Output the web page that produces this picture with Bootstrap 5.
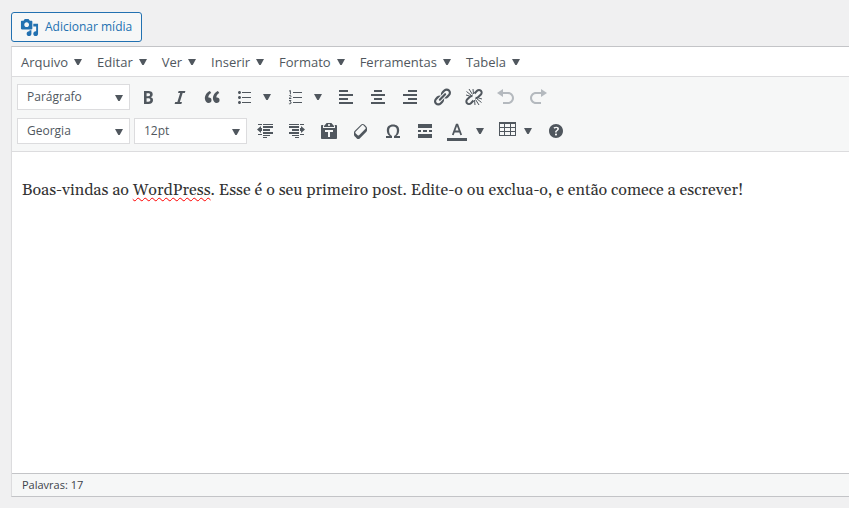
<!DOCTYPE html>
<html lang="pt-BR">
<head>
<meta charset="utf-8">
<meta name="viewport" content="width=device-width, initial-scale=1">
<title>Editor</title>
<link href="https://cdn.jsdelivr.net/npm/bootstrap@5.3.0/dist/css/bootstrap.min.css" rel="stylesheet">
<style>
:root { --ink: #50575e; --line: #dcdcde; --edge: #c3c4c7; --panel: #f6f7f7; }
body { background: #f0f0f1; color: var(--ink); font-family: "Open Sans", sans-serif; font-size: 13px; line-height: 20px; }
main { padding: 12px 0 0 11px; }
svg { display: block; fill: currentColor; flex: none; }
.btn-media { --bs-btn-color: #2271b1; --bs-btn-bg: #f6f7f7; --bs-btn-border-color: #2271b1; --bs-btn-hover-color: #0a4b78; --bs-btn-hover-bg: #f0f0f1; --bs-btn-hover-border-color: #0a4b78; height: 30px; padding: 0 9px 0 8px; border-radius: 3px; font-size: 12px; gap: 6px; }
.editor { border: 1px solid var(--line); border-top-color: var(--edge); border-right: 0; border-bottom: 1px solid var(--edge); box-shadow: 0 1px 1px rgba(0,0,0,.04); }
.menus { border-bottom: 1px solid var(--line); padding-left: 9px; gap: 15px; height: 30px; }
.menus button, .tool { color: var(--ink); background: none; border: 0; padding: 0; }
.menus button { display: flex; align-items: center; gap: 6px; }
.arrow { width: 8px; height: 6px; }
.tools { background: var(--panel); border-bottom: 1px solid var(--line); padding: 6px 0 6px 5px; gap: 6px; }
.tool-row { height: 28px; }
.tool { display: flex; align-items: center; padding: 0 6px; height: 28px; }
.tool.split { padding-right: 8px; gap: 9px; }
.tool.split.grid-tool { gap: 6px; }
.tool:disabled { color: #b4b9be; }
.pick { width: 113px; height: 26px; margin-right: 4px; }
.pick.last-pick { margin-right: 2px; }
.pick select { display: block; width: 100%; height: 100%; appearance: none; border: 1px solid var(--line); background: #fff; color: var(--ink); padding: 0 20px 0 9px; font-size: 12px; }
.pick .arrow { right: 7px; top: 11px; pointer-events: none; }
.writing { background: #fff; min-height: 321px; padding: 26px 10px; color: #333; font: 16px/24px Gelasio, Georgia, "Liberation Serif", serif; }
.misspelt { text-decoration: underline wavy #f00 1px; text-decoration-skip-ink: none; text-underline-offset: 2px; }
.status { background: var(--panel); border-top: 1px solid var(--edge); padding: 1px 10px; font-size: 11px; color: #3c434a; }
</style>
</head>
<body>
<svg class="d-none" aria-hidden="true"><symbol id="down" viewBox="0 0 8 6"><path d="M0 0h8L4.700 6H3.300z"/></symbol></svg>
<main class="d-flex flex-column align-items-stretch">
<div class="d-flex">
<button type="button" class="btn btn-media d-inline-flex align-items-center"><svg width="19" height="19" viewBox="0 0 20 20" aria-hidden="true"><path fill-rule="evenodd" d="M13 11V4c0-.55-.45-1-1-1h-1.67L9 1H5L3.67 3H2c-.55 0-1 .45-1 1v7c0 .55.45 1 1 1h10c.55 0 1-.45 1-1zM7 4.5c1.38 0 2.5 1.12 2.5 2.5S8.380 9.500 7 9.500 4.500 8.380 4.500 7 5.620 4.500 7 4.500zM14 6h5v10.500c0 1.380-1.120 2.500-2.500 2.500S14 17.880 14 16.500s1.120-2.500 2.500-2.500c.17 0 .34.02.5.05V9h-3V6zm-4 8.050V13h2v3.500c0 1.380-1.120 2.500-2.500 2.500S7 17.880 7 16.500 8.120 14 9.500 14c.17 0 .34.02.5.05z"/></svg>Adicionar mídia</button>
</div>
<section class="editor mt-1">
<nav class="menus d-flex bg-white" aria-label="Menu">
<button type="button">Arquivo <svg class="arrow"><use href="#down"/></svg></button>
<button type="button">Editar <svg class="arrow"><use href="#down"/></svg></button>
<button type="button">Ver <svg class="arrow"><use href="#down"/></svg></button>
<button type="button">Inserir <svg class="arrow"><use href="#down"/></svg></button>
<button type="button">Formato <svg class="arrow"><use href="#down"/></svg></button>
<button type="button">Ferramentas <svg class="arrow"><use href="#down"/></svg></button>
<button type="button">Tabela <svg class="arrow"><use href="#down"/></svg></button>
</nav>
<div class="tools d-flex flex-column" role="toolbar" aria-label="Formatação">
<div class="tool-row d-flex align-items-center">
<div class="pick last-pick position-relative"><select aria-label="Estilo"><option>Parágrafo</option></select><svg class="arrow position-absolute"><use href="#down"/></svg></div>
<button type="button" class="tool" aria-label="Negrito"><svg width="20" height="20" viewBox="0 0 20 20"><path d="M6 4v13h4.54c1.37 0 2.46-.33 3.26-1 .8-.66 1.2-1.58 1.2-2.77 0-.84-.17-1.51-.51-2.01s-.9-.85-1.67-1.03v-.09c.57-.1 1.02-.4 1.36-.9s.51-1.13.51-1.91c0-1.14-.39-1.98-1.17-2.5C12.75 4.26 11.5 4 9.78 4H6zm2.57 5.15V6.26h1.36c.73 0 1.27.11 1.61.32.34.22.51.58.51 1.07 0 .54-.16.92-.47 1.15s-.82.35-1.51.35h-1.5zm0 2.19h1.6c1.44 0 2.16.53 2.16 1.61 0 .6-.17 1.05-.51 1.34s-.86.43-1.57.43H8.57v-3.38z"/></svg></button>
<button type="button" class="tool" aria-label="Itálico"><svg width="20" height="20" viewBox="0 0 20 20"><path d="M14.78 6h-2.13l-2.8 9h2.12l-.62 2H4.6l.62-2h2.14l2.8-9H8.03l.62-2h6.75z"/></svg></button>
<button type="button" class="tool" aria-label="Citação"><svg width="20" height="20" viewBox="0 0 20 20"><path d="M9.49 13.22c0-.74-.2-1.38-.61-1.9-.62-.78-1.83-.88-2.53-.72-.29-1.65 1.11-3.75 2.92-4.65L7.88 4c-2.73 1.3-5.42 4.28-4.96 8.05C3.21 14.43 4.59 16 6.54 16c.85 0 1.56-.25 2.12-.75s.83-1.18.83-2.03zm8.05 0c0-.74-.2-1.38-.61-1.9-.63-.78-1.83-.88-2.53-.72-.29-1.65 1.11-3.75 2.92-4.65L15.93 4c-2.73 1.3-5.41 4.28-4.95 8.05.29 2.38 1.66 3.95 3.61 3.95.85 0 1.56-.25 2.12-.75s.83-1.18.83-2.03z"/></svg></button>
<button type="button" class="tool split" aria-label="Lista com marcadores"><svg width="20" height="20" viewBox="0 0 20 20"><path d="M5.5 7C4.67 7 4 6.33 4 5.5 4 4.68 4.67 4 5.5 4 6.32 4 7 4.68 7 5.5 7 6.33 6.32 7 5.5 7zM8 5h9v1H8V5zm-2.5 7c-.83 0-1.5-.67-1.5-1.5C4 9.68 4.67 9 5.5 9c.82 0 1.5.68 1.5 1.5 0 .83-.68 1.5-1.5 1.5zM8 10h9v1H8v-1zm-2.5 7c-.83 0-1.5-.67-1.5-1.5 0-.82.67-1.5 1.5-1.5.82 0 1.5.68 1.5 1.5 0 .83-.68 1.5-1.5 1.5zM8 15h9v1H8v-1z"/></svg><svg class="arrow"><use href="#down"/></svg></button>
<button type="button" class="tool split" aria-label="Lista numerada"><svg width="20" height="20" viewBox="0 0 20 20"><path d="M8 5h9v1H8zM8 10h9v1H8zM8 15h9v1H8z"/><path fill="none" stroke="currentColor" stroke-width="1" d="M4 4.2l1.400-.7v3.800M4 9c.3-.8 2-.8 2 .2 0 .7-1 1.300-2 2.300h2.300M4 13.500h2l-1 1.300c1.600 0 1.600 2-.1 2-.5 0-.8-.1-1-.4"/></svg><svg class="arrow"><use href="#down"/></svg></button>
<button type="button" class="tool" aria-label="Alinhar à esquerda"><svg width="20" height="20" viewBox="0 0 20 20"><path d="M3 3h9v2H3zM3 7h14v2H3zM3 11h9v2H3zM3 15h14v2H3z"/></svg></button>
<button type="button" class="tool" aria-label="Centralizar"><svg width="20" height="20" viewBox="0 0 20 20"><path d="M6 3h8v2H6zM3 7h14v2H3zM6 11h8v2H6zM3 15h14v2H3z"/></svg></button>
<button type="button" class="tool" aria-label="Alinhar à direita"><svg width="20" height="20" viewBox="0 0 20 20"><path d="M8 3h9v2H8zM3 7h14v2H3zM8 11h9v2H8zM3 15h14v2H3z"/></svg></button>
<button type="button" class="tool" aria-label="Inserir link"><svg width="20" height="20" viewBox="0 0 20 20"><path d="M17.74 2.76c1.68 1.69 1.68 4.41 0 6.1l-1.53 1.52c-1.12 1.12-2.7 1.47-4.14 1.09l2.62-2.61.76-.77.76-.76c.84-.84.84-2.2 0-3.04-.84-.85-2.2-.85-3.04 0l-.77.76-3.38 3.38c-.37-1.44-.02-3.02 1.1-4.14l1.52-1.53c1.69-1.68 4.42-1.68 6.1 0zM8.59 13.43l5.34-5.34c.42-.42.42-1.1 0-1.52-.44-.43-1.13-.39-1.53 0l-5.33 5.34c-.42.42-.42 1.1 0 1.52.44.43 1.13.39 1.52 0zm-.76 2.29l4.14-4.15c.38 1.44.03 3.02-1.09 4.14l-1.52 1.53c-1.69 1.68-4.41 1.68-6.1 0-1.68-1.68-1.68-4.42 0-6.1l1.53-1.52c1.12-1.12 2.7-1.47 4.14-1.1l-4.14 4.15c-.85.84-.85 2.2 0 3.05.84.84 2.2.84 3.04 0z"/></svg></button>
<button type="button" class="tool" aria-label="Remover link"><svg width="20" height="20" viewBox="0 0 20 20"><g fill="none" stroke="currentColor"><path stroke-width="2" d="M10.500 6.500l2.600-2.800c1-1 2.800-1 3.800 0s1 2.800 0 3.800L14 10.300c-.7.700-1.700.8-2.500.5M9.500 13.500l-2.600 2.800c-1 1-2.800 1-3.800 0s-1-2.800 0-3.800L6 9.700c.7-.7 1.700-.8 2.500-.5"/><path d="M9 2l.5 5M5 2l3.500 5.500M2.500 4.500l5 4M2 8l3.500 1M11 18l-.5-5M15 18l-3.500-5.500M17.500 15.500l-5-4M18 12l-3.500-1"/></g></svg></button>
<button type="button" class="tool" aria-label="Desfazer" disabled><svg width="20" height="20" viewBox="0 0 20 20"><path d="M12 5H7V2L1 6l6 4V7h5c2.200 0 4 1.800 4 4s-1.800 4-4 4H7v2h5c3.300 0 6-2.700 6-6s-2.700-6-6-6z"/></svg></button>
<button type="button" class="tool" aria-label="Refazer" disabled><svg width="20" height="20" viewBox="0 0 20 20"><path d="M8 5h5V2l6 4-6 4V7H8c-2.200 0-4 1.800-4 4s1.800 4 4 4h5v2H8c-3.300 0-6-2.700-6-6s2.700-6 6-6z"/></svg></button>
</div>
<div class="tool-row d-flex align-items-center">
<div class="pick position-relative"><select aria-label="Fonte"><option>Georgia</option></select><svg class="arrow position-absolute"><use href="#down"/></svg></div>
<div class="pick last-pick position-relative"><select aria-label="Tamanho"><option>12pt</option></select><svg class="arrow position-absolute"><use href="#down"/></svg></div>
<button type="button" class="tool" aria-label="Diminuir recuo"><svg width="20" height="20" viewBox="0 0 20 20"><path d="M3 3h4v1H3zM8 3h10v1H8zM8 5h10v2H8zM8 8h7v2H8zM8 11h10v2H8zM3 13h4v1H3zM8 14h7v1H8zM8 16h4v1H8zM2 8.500L6 5v2h1v3H6v2z"/></svg></button>
<button type="button" class="tool" aria-label="Aumentar recuo"><svg width="20" height="20" viewBox="0 0 20 20"><path d="M13 3h4v1h-4zM2 3h10v1H2zM2 5h10v2H2zM5 8h7v2H5zM2 11h10v2H2zM13 13h4v1h-4zM5 14h7v1H5zM8 16h4v1H8zM18 8.500L14 5v2h-1v3h1v2z"/></svg></button>
<button type="button" class="tool" aria-label="Colar como texto"><svg width="20" height="20" viewBox="0 0 20 20"><path fill-rule="evenodd" d="M12.380 2L15 5v1H5V5l2.640-3h4.740zM10 5c.55 0 1-.44 1-1 0-.55-.45-1-1-1s-1 .45-1 1c0 .56.45 1 1 1zm5.450-1H17c.55 0 1 .45 1 1v12c0 .56-.45 1-1 1H3c-.55 0-1-.44-1-1V5c0-.55.45-1 1-1h1.550L4 4.630V7h12V4.630zM14 11V9H6v2h3v5h2v-5h3z"/></svg></button>
<button type="button" class="tool" aria-label="Limpar formatação"><svg width="20" height="20" viewBox="0 0 20 20"><path fill-rule="evenodd" d="M14.290 4.590l1.100 1.110c.41.4.61.94.61 1.470v2.120c0 .53-.2 1.070-.61 1.470l-6.630 6.630c-.4.41-.94.61-1.470.61s-1.070-.2-1.470-.61l-1.110-1.100-1.100-1.110c-.41-.4-.61-.94-.61-1.470v-2.120c0-.54.2-1.070.61-1.480l6.630-6.620c.4-.41.94-.61 1.470-.61s1.060.2 1.470.61zm-6.210 9.700l6.420-6.420c.39-.39.39-1.030 0-1.430L12.360 4.300c-.19-.19-.45-.29-.72-.29s-.52.1-.71.29l-6.420 6.420c-.39.4-.39 1.040 0 1.430l2.140 2.140c.38.38 1.040.38 1.430 0z"/></svg></button>
<button type="button" class="tool" aria-label="Caractere especial"><svg width="20" height="20" viewBox="0 0 20 20"><path d="M10 5.400c1.270 0 2.240.36 2.910 1.080.66.71 1 1.760 1 3.130 0 1.280-.23 2.370-.69 3.270-.47.89-1.270 1.520-2.220 2.120v2h6v-2h-3.690c.92-.64 1.620-1.340 2.120-2.340.49-1.010.74-2.130.74-3.350 0-1.780-.55-3.190-1.650-4.220S11.920 3.540 10 3.540s-3.430.53-4.520 1.570c-1.100 1.040-1.650 2.440-1.650 4.200 0 1.210.24 2.310.73 3.330.48 1.010 1.190 1.710 2.100 2.360H3v2h6v-2c-.98-.64-1.800-1.280-2.240-2.170-.45-.89-.67-1.960-.67-3.220 0-1.370.33-2.410 1-3.130C7.750 5.760 8.720 5.400 10 5.400z"/></svg></button>
<button type="button" class="tool" aria-label="Inserir quebra"><svg width="20" height="20" viewBox="0 0 20 20"><path d="M17 7V3H3v4h14zM6 11V9H3v2h3zm6 0V9H8v2h4zm5 0V9h-3v2h3zm0 6v-4H3v4h14z"/></svg></button>
<button type="button" class="tool split" aria-label="Cor do texto"><svg width="20" height="20" viewBox="0 0 20 20"><path fill="none" stroke="currentColor" stroke-width="1.800" d="M5.800 14L9.600 3.700h.8L14.200 14M7.200 10.500h5.600"/><path d="M0 17h20v3H0z"/></svg><svg class="arrow"><use href="#down"/></svg></button>
<button type="button" class="tool split grid-tool" aria-label="Tabela"><svg width="20" height="20" viewBox="0 0 20 20"><path fill-rule="evenodd" d="M1 1h17v14H1zM2 3v3h4V3zM7 3v3h5V3zM13 3v3h4V3zM2 7v3h4V7zM7 7v3h5V7zM13 7v3h4V7zM2 11v3h4v-3zM7 11v3h5v-3zM13 11v3h4v-3z"/></svg><svg class="arrow"><use href="#down"/></svg></button>
<button type="button" class="tool" aria-label="Ajuda"><svg width="20" height="20" viewBox="0 0 20 20"><path fill-rule="evenodd" d="M17 10c0-3.870-3.140-7-7-7-3.870 0-7 3.130-7 7s3.130 7 7 7c3.860 0 7-3.130 7-7zm-6.300 1.480H9.140v-.43c0-.38.08-.7.24-.98s.46-.57.88-.89c.41-.29.68-.53.81-.71.14-.18.2-.39.2-.62 0-.25-.09-.44-.28-.58-.19-.13-.45-.19-.79-.19-.58 0-1.250.19-2 .57l-.64-1.280c.87-.49 1.800-.74 2.770-.74.81 0 1.450.2 1.920.58.480.39.710.91.710 1.550 0 .43-.09.8-.29 1.110-.19.320-.57.670-1.110 1.060-.38.280-.61.490-.71.630-.1.150-.15.340-.15.570v.35zm-1.470 2.740c-.18-.17-.27-.42-.27-.73 0-.33.08-.58.26-.75s.43-.25.77-.25c.32 0 .57.09.75.26s.27.42.27.74c0 .3-.09.55-.27.72-.18.18-.43.27-.75.27-.33 0-.58-.09-.76-.26z"/></svg></button>
</div>
</div>
<div class="writing" contenteditable="true" spellcheck="false" role="textbox" aria-label="Conteúdo">Boas-vindas ao <span class="misspelt">WordPress</span>. Esse é o seu primeiro post. Edite-o ou exclua-o, e então comece a escrever!</div>
<div class="status">Palavras: 17</div>
</section>
</main>
<script src="https://cdn.jsdelivr.net/npm/bootstrap@5.3.0/dist/js/bootstrap.bundle.min.js"></script>
</body>
</html>
